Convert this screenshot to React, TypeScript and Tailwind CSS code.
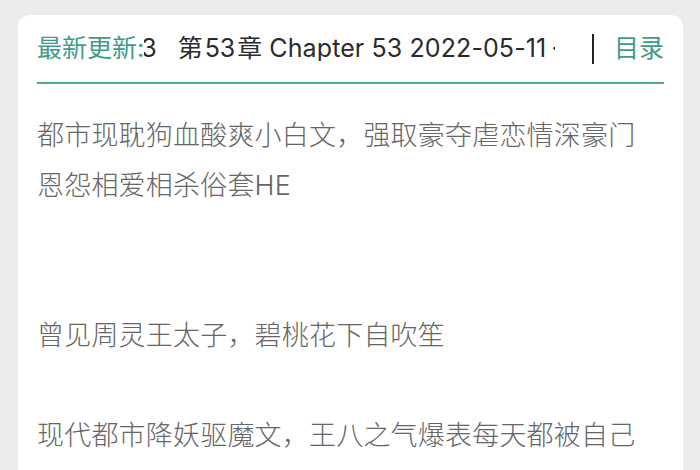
const CJK = '"Inter", "Noto Sans CJK SC", sans-serif';

export default function App() {
  return (
    <div className="h-[470px] overflow-hidden bg-[#ececec] pt-[15px]" style={{ fontFamily: CJK }}>
      <div className="ml-[18px] mr-[17px] h-[460px] rounded-t-[12px] bg-white px-[19px]">
        {/* header */}
        <div className="flex h-[69px] items-center border-b-2 border-[#4aa893]">
          <span className="shrink-0 text-[25px] leading-none text-[#3f9c87]">最新更新:</span>
          <div className="w-[411px] shrink-0 overflow-hidden whitespace-nowrap text-[25px] leading-none text-[#2b2b2b]">
            <span className="-ml-[3px] inline-block">3</span>
            <span className="ml-[21px] inline-block">
              第<span className="mx-[2px]">53</span>章{" "}
              <span className="tracking-[0.1px]">Chapter 53 2022-05-11</span>
            </span>
            <span className="ml-[5px] inline-block">·</span>
          </div>
          <div className="ml-auto h-[30px] w-[2px] bg-[#222]" />
          <span className="ml-[20px] text-[25px] leading-none text-[#3f9c87]">目录</span>
        </div>

        {/* body */}
        <div className="pt-[27px] text-[27px] font-light leading-[50px] tracking-[0.2px] text-[#666]">
          都市现耽狗血酸爽小白文，强取豪夺虐恋情深豪门
          <br />
          恩怨相爱相杀俗套HE
          <br />
          <br />
          <br />
          曾见周灵王太子，碧桃花下自吹笙
          <br />
          <br />
          现代都市降妖驱魔文，王八之气爆表每天都被自己
        </div>
      </div>
    </div>
  );
}
